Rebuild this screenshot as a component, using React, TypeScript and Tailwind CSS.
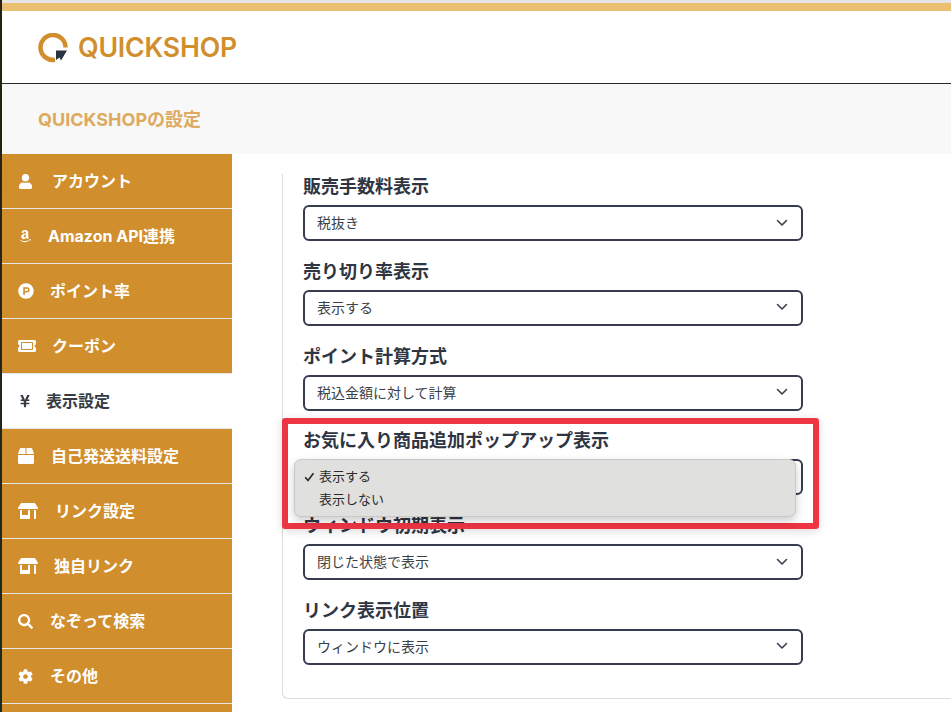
import { FaUser, FaAmazon, FaProductHunt, FaTicketAlt, FaYenSign, FaBox, FaStoreAlt, FaSearch, FaCog } from "react-icons/fa";
import type { ReactNode } from "react";

const font = "[font-family:Inter,'Noto_Sans_CJK_JP','Liberation_Sans',sans-serif]";

function Chevron() {
  return (
    <svg width="12" height="8" viewBox="0 0 12 8" fill="none" stroke="#374151" strokeWidth="1.6" strokeLinecap="round" strokeLinejoin="round" className="mr-[11px]">
      <path d="M1.500 1.500L6 6l4.500-4.500" />
    </svg>
  );
}

function Field({ label, value, open }: { label: string; value?: string; open?: boolean }) {
  return (
    <div className="h-[84.800px]">
      <div className="h-[31px] pt-[1px] text-[18px] leading-[24px] font-bold text-[#2f3542]">{label}</div>
      <div className="flex h-[36px] w-[500px] items-center justify-between rounded-[6px] border-2 border-[#363b4e] bg-white pb-[1px] pl-[12px] pr-[2px] text-[14px] text-[#3b3f48]">
        <span>{open ? "" : value}</span>
        <Chevron />
      </div>
    </div>
  );
}

function Item({ icon, label, active, gap }: { icon: ReactNode; label: string; active?: boolean; gap: string }) {
  return (
    <div className={`flex h-[55px] items-center border-b border-[#e5e5e5] pl-[16px] text-[16px] font-bold ${active ? "bg-white text-[#363b42]" : "bg-[#d18e2d] text-white"}`}>
      <span className={`flex justify-start ${gap}`}>{icon}</span>
      <span>{label}</span>
    </div>
  );
}

export default function App() {
  return (
    <div className={`relative h-[712px] w-[951px] overflow-hidden bg-white pl-[2px] ${font}`}>
      <div className="absolute left-0 top-0 h-full w-[2px] bg-gradient-to-b from-[#26220f] to-[#1b2a22]" />
      <div className="h-[3px] bg-[#e5e5e5]" />
      <div className="h-[8px] bg-[#ebbf72]" />
      <header className="flex h-[73px] items-center border-b border-[#26282c] bg-white pl-[36px]">
        <svg width="30" height="30" viewBox="0 0 30 30" fill="none" className="mr-[10px] mt-[2px]">
          <path d="M17 26.800A12.500 12.500 0 1 1 27.500 14.500" stroke="#d18e2d" strokeWidth="4.500" />
          <path d="M18 17.500H29L23 27.500 21.500 24.500 18 27z" fill="#2b3443" />
        </svg>
        <span className="text-[26.700px] font-semibold leading-none tracking-[-0.2px] text-[#d18e2d]">QUICKSHOP</span>
      </header>
      <div className="flex h-[70px] items-center bg-[#f8f8f8] pl-[36px] text-[18px] font-bold text-[#deaa5f]">QUICKSHOPの設定</div>
      <div className="flex h-[558px]">
        <nav className="w-[230px] shrink-0 bg-[#d18e2d]">
          <Item icon={<FaUser size={15} />} label="アカウント" gap="w-[34px]" />
          <Item icon={<FaAmazon size={14} />} label="Amazon API連携" gap="w-[30px]" />
          <Item icon={<FaProductHunt size={16} />} label="ポイント率" gap="w-[32px]" />
          <Item icon={<FaTicketAlt size={18} />} label="クーポン" gap="w-[34px]" />
          <Item icon={<FaYenSign size={14} />} label="表示設定" active gap="w-[28px]" />
          <Item icon={<FaBox size={16} />} label="自己発送送料設定" gap="w-[33px]" />
          <Item icon={<FaStoreAlt size={20} />} label="リンク設定" gap="w-[37px]" />
          <Item icon={<FaStoreAlt size={20} />} label="独自リンク" gap="w-[36px]" />
          <Item icon={<FaSearch size={15} />} label="なぞって検索" gap="w-[32px]" />
          <Item icon={<FaCog size={15} />} label="その他" gap="w-[32px]" />
        </nav>
        <main className="relative ml-[50px] mt-[20px] h-[525px] flex-1 rounded-bl-[6px] border-b border-l border-[#dcdcdc] pl-[20px]">
          <Field label="販売手数料表示" value="税抜き" />
          <Field label="売り切り率表示" value="表示する" />
          <Field label="ポイント計算方式" value="税込金額に対して計算" />
          <Field label="お気に入り商品追加ポップアップ表示" open />
          <Field label="ウィンドウ初期表示" value="閉じた状態で表示" />
          <Field label="リンク表示位置" value="ウィンドウに表示" />
          <div className="absolute left-[-1px] top-[244px] h-[111px] w-[537px] rounded-[3px] border-[6px] border-[#ed3544] shadow-[0_2px_10px_rgba(0,0,0,0.15)]" />
          <div className="absolute left-[11px] top-[285px] w-[502px] rounded-[7px] border border-[#c8c8c6] bg-[#e0e0de] pb-[5px] pt-[5px] text-[13px] leading-[23px] text-[#2b2b2b] shadow-[0_4px_10px_rgba(0,0,0,0.2)]">
            <div className="flex items-center pl-[9px]">
              <svg width="11" height="10" viewBox="0 0 11 10" fill="none" stroke="#2b2b2b" strokeWidth="1.700" className="mr-[4px]">
                <path d="M1.200 5.200L4 8.500 9.500 1.200" />
              </svg>
              表示する
            </div>
            <div className="pl-[24px]">表示しない</div>
          </div>
        </main>
      </div>
    </div>
  );
}
